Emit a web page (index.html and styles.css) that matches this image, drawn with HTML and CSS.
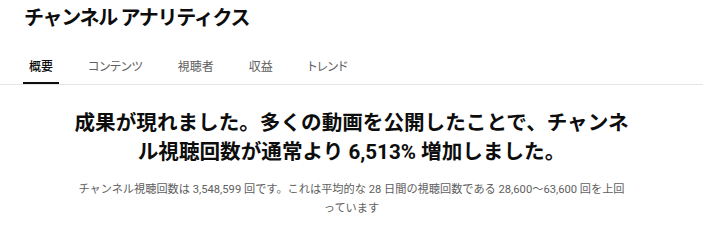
FILE: index.html
```html
<!DOCTYPE html>
<html lang="ja">
<head>
    <meta charset="UTF-8">
    <meta name="viewport" content="width=device-width, initial-scale=1.0">
    <title>チャンネル アナリティクス</title>
    <link rel="stylesheet" href="styles.css">
</head>
<body>
    <div class="header">
        <h1 class="title">チャンネル アナリティクス</h1>
        <div class="tabs">
            <a class="tab active">概要</a>
            <a class="tab">コンテンツ</a>
            <a class="tab">視聴者</a>
            <a class="tab">収益</a>
            <a class="tab">トレンド</a>
        </div>
    </div>
    <div class="summary">
        <h2 class="headline">成果が現れました。多くの動画を公開したことで、チャンネル視聴回数が通常より 6,513% 増加しました。</h2>
        <p class="detail">チャンネル視聴回数は 3,548,599 回です。これは平均的な 28 日間の視聴回数である 28,600～63,600 回を上回っています</p>
    </div>
</body>
</html>
```

FILE: styles.css
```css
body {
    margin: 0;
    font-family: Roboto, 'Noto Sans CJK JP', sans-serif;
    background: #fff;
    color: #0d0d0d;
}
.header {
    border-bottom: 1px solid #e5e5e5;
}
.title {
    margin: 0;
    padding: 4px 24px 0;
    font-size: 20px;
    line-height: 28px;
    font-weight: 700;
    letter-spacing: -1.3px;
}
.tabs {
    display: flex;
    gap: 23px;
    padding: 0 23px;
    margin-top: 20px;
}
.tab {
    padding: 0 6px;
    font-size: 12px;
    line-height: 30px;
    color: #606060;
    border-bottom: 2px solid transparent;
    font-feature-settings: "palt";
}
.tab.active {
    color: #0d0d0d;
    font-weight: 500;
    border-bottom-color: #0d0d0d;
}
.summary {
    max-width: 560px;
    margin: 0 auto;
    padding-top: 24px;
    text-align: center;
}
.headline {
    margin: 0;
    font-size: 20.6px;
    line-height: 29px;
    font-weight: 700;
}
.detail {
    max-width: 551px;
    margin: 14px auto 0;
    font-size: 11.2px;
    line-height: 18.5px;
    color: #606060;
}
```
